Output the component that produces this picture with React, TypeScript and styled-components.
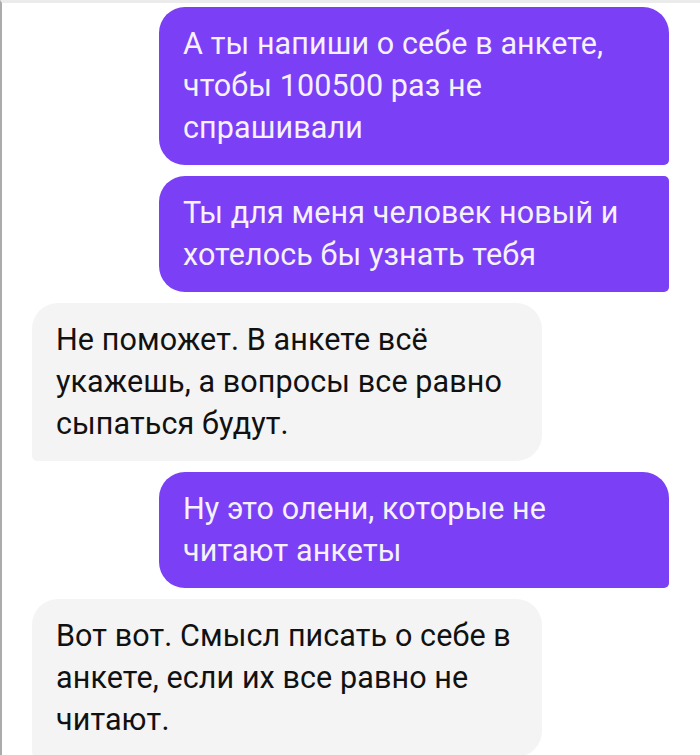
import React from 'react'
import styled, { createGlobalStyle } from 'styled-components'

const GlobalStyle = createGlobalStyle`
  html, body {
    margin: 0;
    padding: 0;
    background: #ffffff;
  }
  body {
    font-family: Roboto, "Noto Sans", "Liberation Sans", sans-serif;
    overflow: hidden;
  }
`

/* рамка скриншота */
const Screen = styled.div`
  width: 700px;
  height: 755px;
  box-sizing: border-box;
  border-top: 3px solid #ebebeb;
  border-left: 2px solid #ababab;
  overflow: hidden;
  background: #fff;
`

const Feed = styled.div`
  display: flex;
  flex-direction: column;
  gap: 11px;
  padding: 4px 31px 0 30px;
`

const Row = styled.div<{ $out?: boolean }>`
  display: flex;
  justify-content: ${p => (p.$out ? 'flex-end' : 'flex-start')};
`

const Bubble = styled.div<{ $out?: boolean; $next?: boolean }>`
  width: 510px;
  box-sizing: border-box;
  padding: 16px 16px 16px 24px;
  font-size: 30.5px;
  line-height: 42px;
  letter-spacing: 0.1px;
  white-space: nowrap;
  background: ${p => (p.$out ? '#7b3ff6' : '#f4f4f4')};
  color: ${p => (p.$out ? '#f6f1ff' : '#111111')};
  border-radius: ${p =>
    p.$out
      ? `26px ${p.$next ? '5px' : '26px'} 5px 26px`
      : `26px 26px 26px 5px`};
`

type Msg = { out?: boolean; next?: boolean; lines: string[] }

const messages: Msg[] = [
  { out: true, lines: ['А ты напиши о себе в анкете,', 'чтобы 100500 раз не', 'спрашивали'] },
  { out: true, next: true, lines: ['Ты для меня человек новый и', 'хотелось бы узнать тебя'] },
  { lines: ['Не поможет. В анкете всё', 'укажешь, а вопросы все равно', 'сыпаться будут.'] },
  { out: true, lines: ['Ну это олени, которые не', 'читают анкеты'] },
  { lines: ['Вот вот. Смысл писать о себе в', 'анкете, если их все равно не', 'читают.'] },
]

export default function App() {
  return (
    <>
      <GlobalStyle />
      <Screen>
        <Feed>
          {messages.map((m, i) => (
            <Row key={i} $out={m.out}>
              <Bubble $out={m.out} $next={m.next}>
                {m.lines.map((l, j) => (
                  <React.Fragment key={j}>
                    {l}
                    {j < m.lines.length - 1 && <br />}
                  </React.Fragment>
                ))}
              </Bubble>
            </Row>
          ))}
        </Feed>
      </Screen>
    </>
  )
}
